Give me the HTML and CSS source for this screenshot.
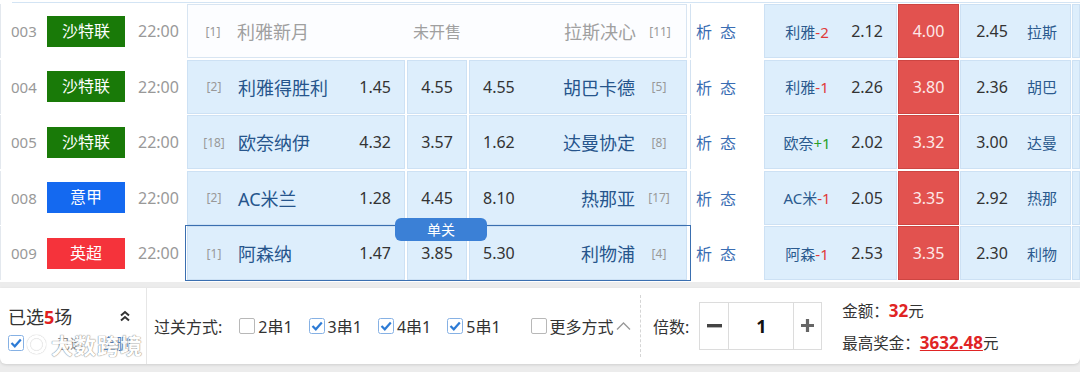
FILE: index.html
```html
<!DOCTYPE html>
<html lang="zh-CN">
<head>
    <meta charset="UTF-8">
    <title>竞彩足球 混合过关</title>
    <link rel="stylesheet" href="styles.css">
</head>
<body>
<div class="topline"></div>
<div class="rows">
    <div class="row">
        <div class="info"><span class="num">003</span><span class="lg lg-sa">沙特联</span><span class="time">22:00</span></div>
        <div class="odds off">
            <div class="cell home"><span class="rk">[1]</span><span class="tm">利雅新月</span></div>
            <div class="cell draw">未开售</div>
            <div class="cell away"><span class="tm">拉斯决心</span><span class="rk">[11]</span></div>
        </div>
        <div class="ana"><span>析</span><span>态</span></div>
        <div class="hcp">
            <div class="hc hc-l"><span class="hn">利雅<em class="neg">-2</em></span><span>2.12</span></div>
            <div class="hc red">4.00</div>
            <div class="hc hc-r"><span>2.45</span><span class="hn">拉斯</span></div>
            <div class="hc"></div>
        </div>
    </div>
    <div class="row">
        <div class="info"><span class="num">004</span><span class="lg lg-sa">沙特联</span><span class="time">22:00</span></div>
        <div class="odds">
            <div class="cell home"><span class="rk">[2]</span><span class="tm">利雅得胜利</span><span class="od">1.45</span></div>
            <div class="cell draw">4.55</div>
            <div class="cell away"><span class="od">4.55</span><span class="tm">胡巴卡德</span><span class="rk">[5]</span></div>
        </div>
        <div class="ana"><span>析</span><span>态</span></div>
        <div class="hcp">
            <div class="hc hc-l"><span class="hn">利雅<em class="neg">-1</em></span><span>2.26</span></div>
            <div class="hc red">3.80</div>
            <div class="hc hc-r"><span>2.36</span><span class="hn">胡巴</span></div>
            <div class="hc"></div>
        </div>
    </div>
    <div class="row">
        <div class="info"><span class="num">005</span><span class="lg lg-sa">沙特联</span><span class="time">22:00</span></div>
        <div class="odds">
            <div class="cell home"><span class="rk">[18]</span><span class="tm">欧奈纳伊</span><span class="od">4.32</span></div>
            <div class="cell draw">3.57</div>
            <div class="cell away"><span class="od">1.62</span><span class="tm">达曼协定</span><span class="rk">[8]</span></div>
        </div>
        <div class="ana"><span>析</span><span>态</span></div>
        <div class="hcp">
            <div class="hc hc-l"><span class="hn">欧奈<em class="pos">+1</em></span><span>2.02</span></div>
            <div class="hc red">3.32</div>
            <div class="hc hc-r"><span>3.00</span><span class="hn">达曼</span></div>
            <div class="hc"></div>
        </div>
    </div>
    <div class="row">
        <div class="info"><span class="num">008</span><span class="lg lg-it">意甲</span><span class="time">22:00</span></div>
        <div class="odds">
            <div class="cell home"><span class="rk">[2]</span><span class="tm">AC米兰</span><span class="od">1.28</span></div>
            <div class="cell draw">4.45</div>
            <div class="cell away"><span class="od">8.10</span><span class="tm">热那亚</span><span class="rk">[17]</span></div>
        </div>
        <div class="ana"><span>析</span><span>态</span></div>
        <div class="hcp">
            <div class="hc hc-l"><span class="hn">AC米<em class="neg">-1</em></span><span>2.05</span></div>
            <div class="hc red">3.35</div>
            <div class="hc hc-r"><span>2.92</span><span class="hn">热那</span></div>
            <div class="hc"></div>
        </div>
    </div>
    <div class="row">
        <div class="info"><span class="num">009</span><span class="lg lg-en">英超</span><span class="time">22:00</span></div>
        <div class="odds on">
            <span class="tag">单关</span>
            <div class="cell home"><span class="rk">[1]</span><span class="tm">阿森纳</span><span class="od">1.47</span></div>
            <div class="cell draw">3.85</div>
            <div class="cell away"><span class="od">5.30</span><span class="tm">利物浦</span><span class="rk">[4]</span></div>
        </div>
        <div class="ana"><span>析</span><span>态</span></div>
        <div class="hcp">
            <div class="hc hc-l"><span class="hn">阿森<em class="neg">-1</em></span><span>2.53</span></div>
            <div class="hc red">3.35</div>
            <div class="hc hc-r"><span>2.30</span><span class="hn">利物</span></div>
            <div class="hc"></div>
        </div>
    </div>
</div>

<div class="foot">
    <div class="panel">
        <div class="sel">
            <div class="sel-top">
                <span class="sel-cnt">已选<b>5</b>场</span>
                <svg class="dbl" width="12" height="12" viewBox="0 0 12 12"><path d="M2 5.5 L6 2 L10 5.5 M2 10.5 L6 7 L10 10.5" fill="none" stroke="#333" stroke-width="2"/></svg>
            </div>
            <div class="sel-bot">
                <svg class="box" width="16" height="16" viewBox="0 0 16 16"><rect x="0.5" y="0.5" width="15" height="15" rx="2" fill="#fff" stroke="#86b1e4"/><path d="M3.5 8 L6.8 11.3 L12.8 4.5" fill="none" stroke="#2d7bd5" stroke-width="2.2"/></svg>
                <span class="only">已选</span>
                <span class="del">全删</span>
            </div>
            <div class="wm"><span class="wm-logo"></span>大数跨境</div>
        </div>
        <div class="pass">
            <span class="lbl">过关方式:</span>
            <span class="ck"><span class="box empty"></span>2串1</span>
            <span class="ck"><svg class="box" width="16" height="16" viewBox="0 0 16 16"><rect x="0.5" y="0.5" width="15" height="15" rx="2" fill="#fff" stroke="#86b1e4"/><path d="M3.5 8 L6.8 11.3 L12.8 4.5" fill="none" stroke="#2d7bd5" stroke-width="2.2"/></svg>3串1</span>
            <span class="ck"><svg class="box" width="16" height="16" viewBox="0 0 16 16"><rect x="0.5" y="0.5" width="15" height="15" rx="2" fill="#fff" stroke="#86b1e4"/><path d="M3.5 8 L6.8 11.3 L12.8 4.5" fill="none" stroke="#2d7bd5" stroke-width="2.2"/></svg>4串1</span>
            <span class="ck"><svg class="box" width="16" height="16" viewBox="0 0 16 16"><rect x="0.5" y="0.5" width="15" height="15" rx="2" fill="#fff" stroke="#86b1e4"/><path d="M3.5 8 L6.8 11.3 L12.8 4.5" fill="none" stroke="#2d7bd5" stroke-width="2.2"/></svg>5串1</span>
            <span class="ck more"><span class="box empty"></span>更多方式<svg width="15" height="10" viewBox="0 0 15 10"><path d="M1 8.5 L7.5 2 L14 8.5" fill="none" stroke="#999" stroke-width="1.3"/></svg></span>
        </div>
        <div class="mult">
            <span>倍数:</span>
            <div class="step">
                <span class="minus"><svg width="15" height="4" viewBox="0 0 15 4"><rect width="15" height="3.4" fill="#444"/></svg></span>
                <span class="val">1</span>
                <span class="plus"><svg width="15" height="15" viewBox="0 0 15 15"><path d="M7.5 1 V14 M1 7.5 H14" stroke="#666" stroke-width="3.2"/></svg></span>
            </div>
        </div>
        <div class="amt">
            <div class="amt-l1">金额：<b>32</b>元</div>
            <div class="amt-l2">最高奖金：<b class="big">3632.48</b>元</div>
        </div>
    </div>
</div>
</body>
</html>
```

FILE: styles.css
```css
* {
    margin: 0;
    padding: 0;
    box-sizing: border-box;
}
body {
    width: 1080px;
    height: 372px;
    overflow: hidden;
    background: #fff;
    font-family: "Noto Sans", "Noto Sans CJK SC", sans-serif;
    color: #333;
}
.topline {
    height: 3px;
    margin: 0 0 1px 12px;
    border-bottom: 1px solid #d3e4f4;
}
.rows {
    display: flex;
    flex-direction: column;
    gap: 1.5px;
}
.row {
    display: grid;
    grid-template-columns: 186px 504px 74px 316px;
    height: 54px;
}

/* match info */
.info {
    display: flex;
    align-items: center;
    padding-left: 10px;
    border-left: 1px solid #e3e8ee;
}
.num { width: 36px; font-size: 15px; color: #999; }
.lg {
    width: 78px;
    height: 31px;
    line-height: 31px;
    text-align: center;
    color: #fff;
    font-size: 16px;
}
.lg-sa { background: #197a08; }
.lg-it { background: #1469f0; }
.lg-en { background: #f5333b; }
.time { margin-left: 13px; font-size: 16px; color: #999; }

/* odds */
.odds {
    display: grid;
    grid-template-columns: 218px 60px 218px;
    column-gap: 2px;
    padding-left: 1px;
    position: relative;
}
.cell {
    display: flex;
    align-items: center;
    background: #ddeefc;
    border: 1px solid #cde1f4;
    font-size: 16px;
    color: #333;
    white-space: nowrap;
}
.rk { width: 42px; text-align: center; font-size: 12px; color: #999; }
.tm { font-size: 18px; color: #26558c; }
.home { padding: 0 13px 0 5px; }
.home .tm { margin-left: 3px; }
.home .od { margin-left: auto; }
.draw { justify-content: center; }
.away { padding: 0 6px 0 13px; }
.away .tm { margin-left: auto; margin-right: 3px; }

.odds.off {
    grid-template-columns: 217px 62px 218px;
    column-gap: 1px;
    padding-left: 0;
    margin: 0 3px 0 1px;
    background: #fcfdff;
    border: 1px solid #d8e5f2;
}
.off .cell { background: none; border: none; }
.off .tm, .off .draw { color: #a0a0a0; }
.off .home { padding-left: 4px; }

.odds.on { outline: 1px solid #3a6fb0; }
.tag {
    position: absolute;
    left: 209px;
    top: -8px;
    width: 92px;
    height: 23px;
    line-height: 23px;
    text-align: center;
    background: #3b80d6;
    color: #fff;
    font-size: 14px;
    border-radius: 6px;
    z-index: 2;
}

/* analysis links */
.ana {
    display: flex;
    align-items: center;
    gap: 8px;
    padding-left: 5px;
    border-left: 1px solid #d3e2f1;
    font-size: 16px;
    color: #3a6db3;
}

/* handicap */
.hcp {
    display: grid;
    grid-template-columns: 133px 61px 111px 1fr;
    column-gap: 1px;
}
.hc {
    display: grid;
    align-items: center;
    justify-items: center;
    background: #ddeefc;
    border: 1px solid #cde1f4;
    font-size: 16px;
    color: #333;
    white-space: nowrap;
}
.hc-l { grid-template-columns: 84px 36px; }
.hc-r { grid-template-columns: 62px 38px; }
.hn { font-size: 15px; color: #2b5a8e; }
.hn em { font-style: normal; }
.neg { color: #e03a3a; }
.pos { color: #28a028; }
.hc.red {
    background: #e2524f;
    border-color: #cd4542;
    color: #fde8e8;
}

/* footer */
.foot {
    margin-top: 1.5px;
    padding: 6px 0 8px;
    background: #ececec;
}
.panel {
    display: flex;
    height: 76px;
    background: #fff;
    border-radius: 0 0 6px 6px;
    box-shadow: 0 1px 3px rgba(0,0,0,0.12);
    white-space: nowrap;
}
.panel > div { flex: none; }
.sel {
    position: relative;
    width: 147px;
    padding: 17px 15px 0 8px;
    border-right: 1px solid #e6e6e6;
}
.sel-top {
    display: flex;
    align-items: center;
    justify-content: space-between;
    height: 22px;
}
.sel-cnt { font-size: 18px; color: #333; }
.sel-cnt b { color: #e02020; }
.sel-bot {
    display: flex;
    align-items: center;
    height: 22px;
    margin-top: 5px;
    font-size: 13px;
    color: #888;
}
.sel-bot .only { margin-left: 30px; }
.sel-bot .del { margin-left: auto; font-size: 15px; color: #4a7fc0; }
.wm {
    position: absolute;
    left: 27px;
    top: 43px;
    display: flex;
    align-items: center;
    gap: 5px;
    font-size: 22px;
    line-height: 28px;
    font-weight: bold;
    letter-spacing: 1px;
    color: #fff;
    opacity: 0.9;
    text-shadow: 0 0 1px #777, 0 0 1px #777;
}
.wm-logo {
    width: 19px;
    height: 19px;
    border: 3px solid #fff;
    border-radius: 50%;
    box-shadow: 0 0 1px #777, inset 0 0 1px #777;
}

.box { flex: none; margin-right: 3px; }
.box.empty {
    display: inline-block;
    width: 16px;
    height: 16px;
    border: 1px solid #b8b8b8;
    border-radius: 2px;
}
.pass {
    display: flex;
    align-items: center;
    width: 494px;
    margin: 7px 0;
    padding-left: 7px;
    border-right: 1px dashed #d5d5d5;
    font-size: 16px;
    color: #333;
}
.pass > span { flex: none; }
.lbl { margin-right: 17px; }
.ck { display: flex; align-items: center; margin-right: 16px; }
.ck.more { margin-left: 14px; }
.ck.more svg { margin-left: 2px; }

.mult {
    display: flex;
    align-items: center;
    padding-left: 12px;
    font-size: 16px;
    color: #333;
}
.step {
    display: flex;
    height: 48px;
    margin-left: 10px;
    border: 1px solid #dcdcdc;
}
.step span { display: flex; align-items: center; justify-content: center; }
.minus { width: 28px; }
.val {
    width: 66px;
    border-left: 1px solid #dcdcdc;
    border-right: 1px solid #dcdcdc;
    font-size: 18px;
    font-weight: bold;
    color: #111;
}
.plus { width: 27px; }

.amt {
    padding-left: 20px;
    font-size: 15.5px;
    color: #333;
}
.amt-l1 { margin-top: 12px; line-height: 22px; }
.amt-l2 { margin-top: 10px; line-height: 22px; }
.amt b { color: #e02424; font-size: 17px; }
.amt .big { text-decoration: underline; }
```
